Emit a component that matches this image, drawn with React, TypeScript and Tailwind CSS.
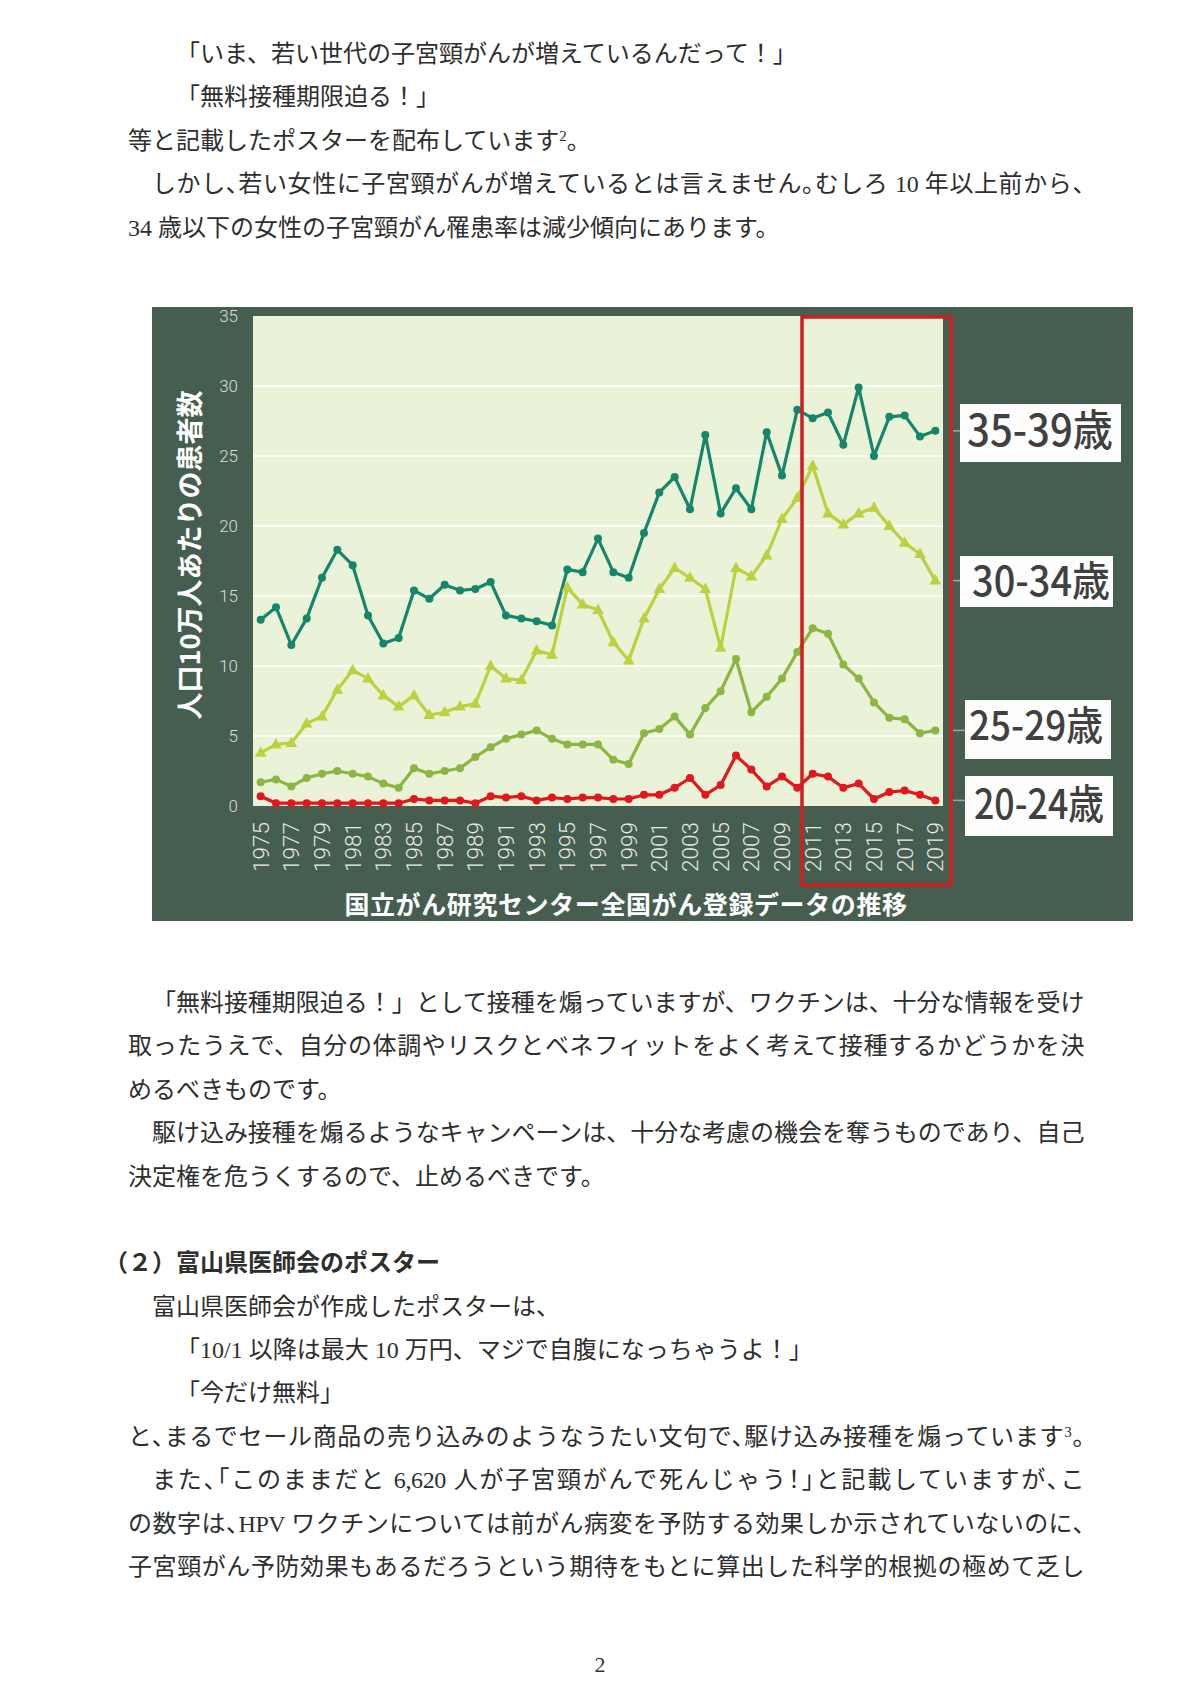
import React from "react";
import clsx from "clsx";

// values read off the figure (per 100k), 1975 .. 2019
const S35 = [13.3, 14.2, 11.5, 13.4, 16.3, 18.3, 17.2, 13.6, 11.6, 12.0, 15.4, 14.8, 15.8, 15.4, 15.5, 16.0, 13.6, 13.4, 13.2, 12.9, 16.9, 16.7, 19.1, 16.7, 16.3, 19.5, 22.4, 23.5, 21.2, 26.5, 20.9, 22.7, 21.2, 26.7, 23.6, 28.3, 27.7, 28.1, 25.8, 29.9, 25.0, 27.8, 27.9, 26.4, 26.8];
const S30 = [3.8, 4.4, 4.5, 5.9, 6.4, 8.3, 9.7, 9.1, 7.9, 7.1, 7.9, 6.5, 6.7, 7.1, 7.3, 10.0, 9.1, 9.0, 11.1, 10.8, 15.6, 14.4, 14.0, 11.7, 10.4, 13.4, 15.5, 17.0, 16.3, 15.5, 11.3, 17.0, 16.4, 17.9, 20.5, 22.0, 24.3, 20.9, 20.1, 20.9, 21.3, 20.0, 18.8, 18.0, 16.1];
const S25 = [1.7, 1.9, 1.4, 2.0, 2.3, 2.5, 2.3, 2.1, 1.6, 1.3, 2.7, 2.3, 2.5, 2.7, 3.5, 4.2, 4.8, 5.1, 5.4, 4.8, 4.4, 4.4, 4.4, 3.3, 3.0, 5.2, 5.5, 6.4, 5.1, 7.0, 8.2, 10.5, 6.7, 7.8, 9.1, 11.0, 12.7, 12.3, 10.1, 9.1, 7.4, 6.3, 6.2, 5.2, 5.4];
const S20 = [0.7, 0.2, 0.2, 0.2, 0.2, 0.2, 0.2, 0.2, 0.2, 0.2, 0.5, 0.4, 0.4, 0.4, 0.2, 0.7, 0.6, 0.7, 0.4, 0.6, 0.5, 0.6, 0.6, 0.5, 0.5, 0.8, 0.8, 1.3, 2.0, 0.8, 1.5, 3.6, 2.6, 1.4, 2.1, 1.3, 2.3, 2.1, 1.3, 1.6, 0.5, 1.0, 1.1, 0.8, 0.4];

const X = (i: number) => 108.67 + 15.333 * i;
const Y = (v: number) => 499 - 14 * v;

const NUM = "Roboto, 'Noto Sans CJK JP', sans-serif";
const JP = "'Noto Sans CJK JP', sans-serif";

const Series: React.FC<{ data: number[]; color: string; marker: "dot" | "tri" }> = ({ data, color, marker }) => (
  <g>
    <polyline
      points={data.map((v, i) => `${X(i)},${Y(v)}`).join(" ")}
      fill="none"
      stroke={color}
      strokeWidth={3.2}
      strokeLinejoin="round"
    />
    {data.map((v, i) =>
      marker === "dot" ? (
        <circle key={i} cx={X(i)} cy={Y(v)} r={4} fill={color} />
      ) : (
        <polygon
          key={i}
          points={`${X(i)},${Y(v) - 6.5} ${X(i) - 5.8},${Y(v) + 4} ${X(i) + 5.8},${Y(v) + 4}`}
          fill={color}
        />
      )
    )}
  </g>
);

const Legend: React.FC<{ y: number; h: number; x: number; w: number; tx: number; ty: number; size: number; len: number; label: string }> = ({ y, h, x, w, tx, ty, size, len, label }) => (
  <g>
    <rect x={x} y={y} width={w} height={h} fill="#fdfdfd" />
    <text
      x={tx}
      y={ty}
      fontFamily={JP}
      fontSize={size}
      fontWeight={500}
      fill="#404040"
      textLength={len}
      lengthAdjust="spacingAndGlyphs"
    >
      {label}
    </text>
  </g>
);

const Chart: React.FC = () => {
  const years = Array.from({ length: 23 }, (_, k) => k * 2);
  return (
    <svg width={981} height={614} viewBox="0 0 981 614" className="block">
      <rect x={101} y={9} width={690} height={490} fill="#eaf3d7" />
      {[5, 10, 15, 20, 25, 30].map((v) => (
        <line key={v} x1={101} x2={791} y1={Y(v)} y2={Y(v)} stroke="#ffffff" strokeWidth={1.6} />
      ))}

      {[0, 5, 10, 15, 20, 25, 30, 35].map((v) => (
        <text key={v} x={86} y={Y(v) + 6} textAnchor="end" fontFamily={NUM} fontWeight={300} fontSize={17} fill="#d9dfd7">
          {v}
        </text>
      ))}

      {years.map((i) => (
        <text
          key={i}
          x={X(i)}
          y={515}
          dy="0.36em"
          transform={`rotate(-90 ${X(i)} 515)`}
          textAnchor="end"
          fontFamily={NUM}
          fontWeight={300}
          fontSize={22.5}
          fill="#e8ebe5"
        >
          {1975 + i}
        </text>
      ))}

      <Series data={S35} color="#14866b" marker="dot" />
      <Series data={S30} color="#bdd03f" marker="tri" />
      <Series data={S25} color="#8cb542" marker="dot" />
      <Series data={S20} color="#e3161b" marker="dot" />

      <rect x={650} y={10} width={149} height={568} fill="none" stroke="#cf1f1f" strokeWidth={3.5} />

      {[S35, S30, S25, S20].map((s, k) => (
        <line key={k} x1={801} x2={814} y1={Y(s[44])} y2={Y(s[44])} stroke="#9ea79d" strokeWidth={1.5} />
      ))}

      <Legend x={808} y={97} w={161} h={58} tx={815} ty={139} size={43} len={146} label="35-39歳" />
      <Legend x={808} y={249} w={153} h={51} tx={820} ty={289} size={41} len={138} label="30-34歳" />
      <Legend x={813} y={393} w={146} h={59} tx={817} ty={433} size={40} len={134} label="25-29歳" />
      <Legend x={813} y={469} w={148} h={60} tx={822} ty={512} size={41} len={130} label="20-24歳" />

      <text
        x={36}
        y={248}
        transform="rotate(-90 36 248)"
        textAnchor="middle"
        dominantBaseline="central"
        fontFamily={JP}
        fontWeight={700}
        fontSize={27}
        fill="#ffffff"
      >
        人口10万人あたりの患者数
      </text>

      <text x={474} y={596} textAnchor="middle" dominantBaseline="central" fontFamily={JP} fontWeight={700} fontSize={25} fill="#ffffff" letterSpacing={0.6}>
        国立がん研究センター全国がん登録データの推移
      </text>
    </svg>
  );
};

const Line: React.FC<{ indent?: 0 | 1 | 2; justify?: boolean; halt?: boolean; className?: string; children: React.ReactNode }> = ({ indent = 0, justify, halt, className, children }) => (
  <div
    className={clsx(
      "h-[43.4px]",
      indent === 1 && "pl-[24px]",
      indent === 2 && "pl-[48px]",
      justify && "text-justify [text-align-last:justify] tracking-[-0.4px]",
      halt && "[font-feature-settings:'halt']",
      className
    )}
  >
    {children}
  </div>
);

const Sup: React.FC<{ n: string }> = ({ n }) => <sup className="text-[15px] leading-none">{n}</sup>;

export default function App() {
  return (
    <div
      lang="ja"
      className="w-[1200px] min-h-[1698px] bg-white pt-[33px] text-[#2e2e2e] font-[family-name:'Liberation_Serif','Noto_Sans_CJK_JP',serif]"
    >
      <div className="ml-[128px] w-[956px] text-[24px] leading-[43.4px]">
        <Line indent={2}>「いま、若い世代の子宮頸がんが増えているんだって！」</Line>
        <Line indent={2}>「無料接種期限迫る！」</Line>
        <Line>
          等と記載したポスターを配布しています<Sup n="2" />。
        </Line>
        <Line indent={1} justify halt>
          しかし、若い女性に子宮頸がんが増えているとは言えません。むしろ 10 年以上前から、
        </Line>
        <Line>34 歳以下の女性の子宮頸がん罹患率は減少傾向にあります。</Line>
      </div>

      <div className="ml-[152px] mt-[57px] w-[981px] h-[614px] bg-[#465e50]">
        <Chart />
      </div>

      <div className="ml-[128px] mt-[61px] w-[956px] text-[24px] leading-[43.4px]">
        <Line indent={1} justify>
          「無料接種期限迫る！」として接種を煽っていますが、ワクチンは、十分な情報を受け
        </Line>
        <Line justify>取ったうえで、自分の体調やリスクとベネフィットをよく考えて接種するかどうかを決</Line>
        <Line>めるべきものです。</Line>
        <Line indent={1} justify>
          駆け込み接種を煽るようなキャンペーンは、十分な考慮の機会を奪うものであり、自己
        </Line>
        <Line>決定権を危うくするので、止めるべきです。</Line>
        <Line>{"\u00a0"}</Line>
        <Line className="-ml-[24px] font-bold">（２）富山県医師会のポスター</Line>
        <Line indent={1}>富山県医師会が作成したポスターは、</Line>
        <Line indent={2}>「10/1 以降は最大 10 万円、マジで自腹になっちゃうよ！」</Line>
        <Line indent={2}>「今だけ無料」</Line>
        <Line justify halt>
          と、まるでセール商品の売り込みのようなうたい文句で、駆け込み接種を煽っています<Sup n="3" />。
        </Line>
        <Line indent={1} justify halt>
          また、「このままだと 6,620 人が子宮頸がんで死んじゃう！」と記載していますが、こ
        </Line>
        <Line justify halt>
          の数字は、HPV ワクチンについては前がん病変を予防する効果しか示されていないのに、
        </Line>
        <Line justify>子宮頸がん予防効果もあるだろうという期待をもとに算出した科学的根拠の極めて乏し</Line>
      </div>

      <div className="mt-[54px] h-[43.4px] text-center text-[22px] leading-[43.4px] text-[#333]">2</div>
    </div>
  );
}
